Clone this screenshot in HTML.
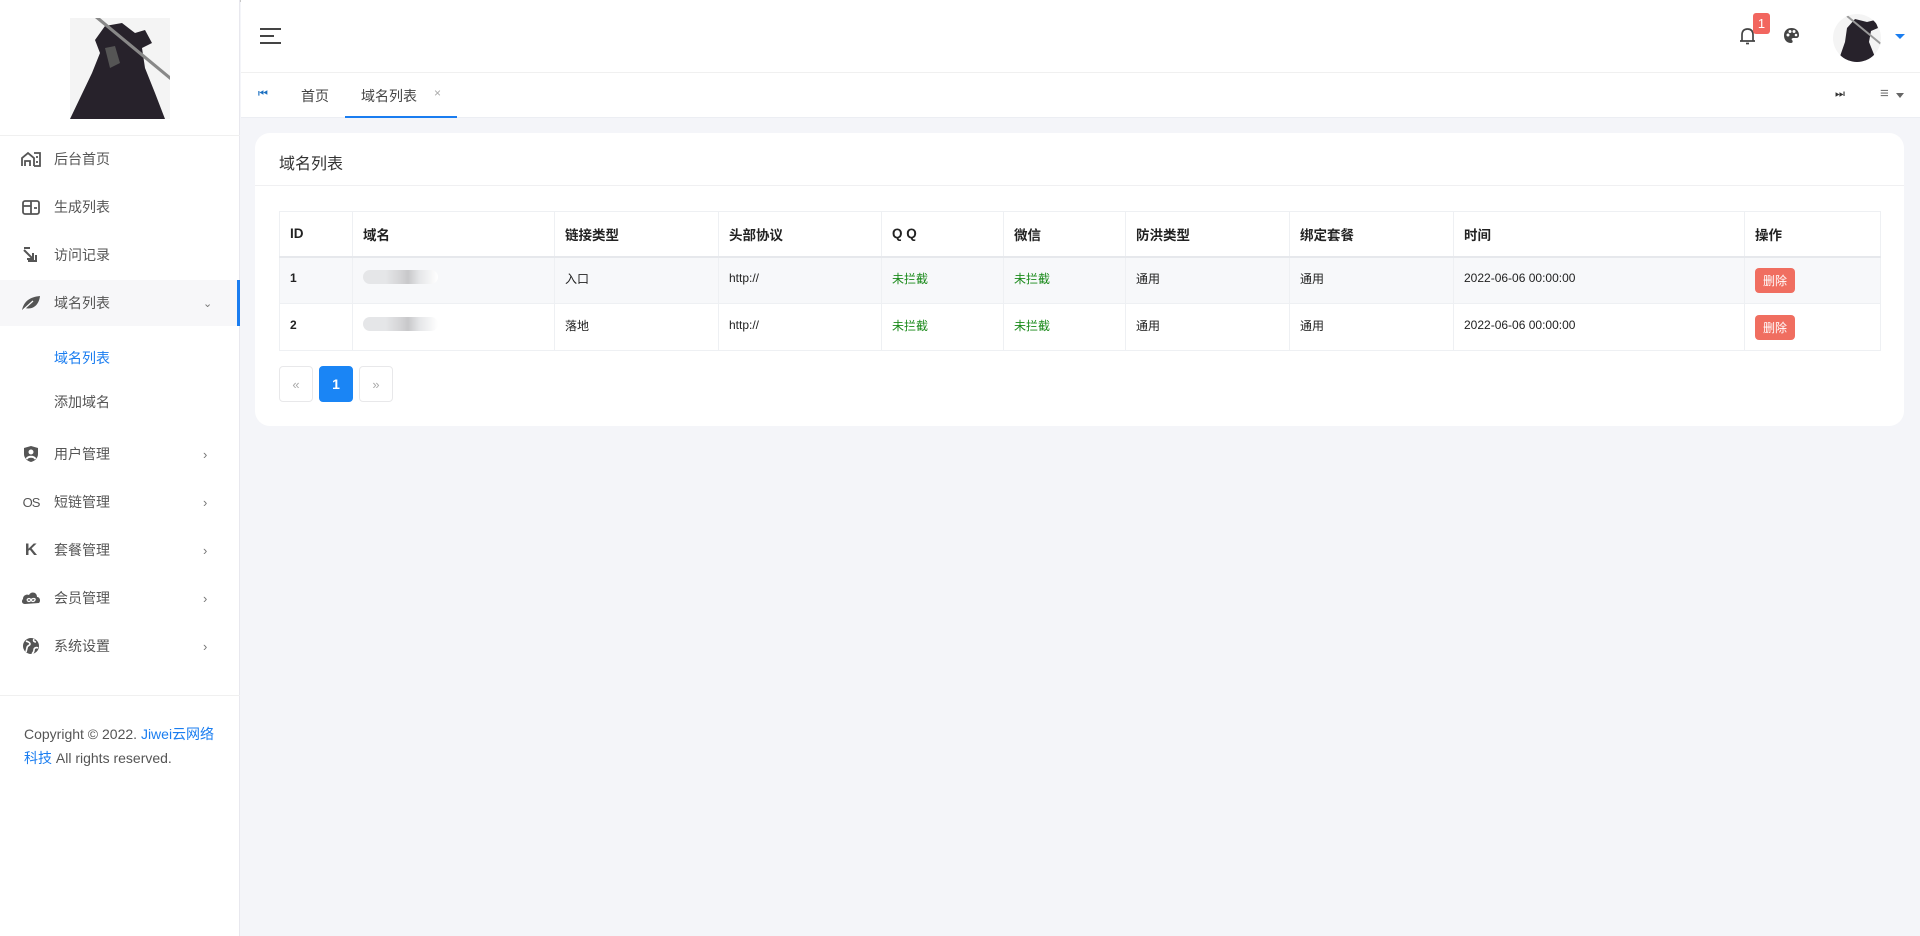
<!DOCTYPE html>
<html><head><meta charset="utf-8"><style>
*{margin:0;padding:0;box-sizing:border-box}
body{width:1920px;height:936px;overflow:hidden;background:#f4f5f9;font-family:"Liberation Sans","Noto Sans CJK SC",sans-serif;color:#333;position:relative}
.side{position:absolute;left:0;top:0;width:240px;height:936px;background:#fff;border-right:1px solid #e8e8ee}
.abs{position:absolute}
.mi{position:absolute;left:0;width:240px;height:46px;display:flex;align-items:center;font-size:14px;color:#555}
.mi .ic{width:20px;margin-left:21px;margin-right:13px;display:flex;justify-content:center}
.mi .ar{position:absolute;left:203px;font-size:13px;color:#777}
.top{position:absolute;left:241px;top:0;right:0;height:73px;background:#fff;border-bottom:1px solid #f0f0f0}
.tabs{position:absolute;left:241px;top:73px;right:0;height:45px;background:#fff;border-bottom:1px solid #eceef3}
.card{position:absolute;left:255px;top:133px;width:1649px;height:293px;background:#fff;border-radius:15px}
table{position:absolute;left:24px;top:78px;width:1601px;border-collapse:collapse;font-size:12px;color:#222;table-layout:fixed}
td,th{border:1px solid #eef0f3;text-align:left;padding-left:10px}
th{height:45px;font-weight:bold;font-size:13.5px;border-bottom:2px solid #e6e8ec}
td{height:47px;padding-bottom:4px}
tr.odd td{background:#f7f8fa}
.g{color:#1a8a1a}
.del{display:inline-block;background:#f06e60;color:#fff;border-radius:4px;padding:4px 8px;font-size:12px;margin-top:4px}
.blur{display:inline-block;width:75px;height:14px;border-radius:7px;background:linear-gradient(90deg,#e5e6e8 30%,#d4d4d6 50%,#c8c8ca 60%,#e5e6e8 75%,#fff 100%)}
.pg{position:absolute;top:233px;width:34px;height:36px;border:1px solid #e8e8ea;border-radius:4px;display:flex;align-items:center;justify-content:center;color:#aaa;font-size:13px}
</style></head><body>
<div style="position:absolute;left:0;top:0;width:1920px;height:2px;background:#c8c8c8"></div>
<div class="side">
  <svg class="abs" style="left:70px;top:18px" width="100" height="101" viewBox="0 0 100 101">
    <rect width="100" height="101" fill="#f4f4f4"/>
    <path d="M0 101 L22 55 L30 35 L25 22 L35 8 L52 5 L65 15 L75 12 L82 25 L72 30 L75 50 L85 75 L95 101Z" fill="#27222b"/>
    <path d="M25 0 L100 62 L100 58 L30 0Z" fill="#888"/>
    <path d="M35 30 L45 28 L50 45 L40 50Z" fill="#555"/>
  </svg>
  <div class="abs" style="left:0;top:135px;width:240px;border-top:1px solid #f0f0f0"></div>
  <div class="mi" style="top:136px"><span class="ic"><svg width="20" height="16" viewBox="0 0 20 16"><path d="M1 15V7l6-5 6 5v8M4 15v-5h5v5M13 2h6v13h-6M16 5v2M16 10v2" fill="none" stroke="#555" stroke-width="1.8"/></svg></span>后台首页</div>
  <div class="mi" style="top:184px"><span class="ic"><svg width="18" height="15" viewBox="0 0 18 15"><rect x="1" y="1" width="16" height="13" rx="2" fill="none" stroke="#555" stroke-width="1.8"/><path d="M9 1v13M1 6h8M12 8h3" stroke="#555" stroke-width="1.8"/></svg></span>生成列表</div>
  <div class="mi" style="top:232px"><span class="ic"><svg width="18" height="16" viewBox="0 0 18 16"><path d="M2 3l9 9M11 6v6H5M2 1h6M14 8v6H6" fill="none" stroke="#555" stroke-width="2"/></svg></span>访问记录</div>
  <div class="mi" style="top:280px;background:#f7f7f9;border-right:3px solid #1a7df0"><span class="ic"><svg width="20" height="16" viewBox="0 0 20 16"><path d="M1 15C3 6 9 2 19 1C18 10 12 15 4 13Z" fill="#555"/><path d="M2 15L12 6" stroke="#fff" stroke-width="1.2"/></svg></span>域名列表<span class="ar" style="font-size:11px">⌄</span></div>
  <div class="abs" style="left:54px;top:348px;font-size:14px;color:#1a7df0">域名列表</div>
  <div class="abs" style="left:54px;top:392px;font-size:14px;color:#555">添加域名</div>
  <div class="mi" style="top:431px"><span class="ic"><svg width="16" height="18" viewBox="0 0 16 18"><path d="M8 1L15 3V9C15 13 12 16 8 17C4 16 1 13 1 9V3Z" fill="#555"/><circle cx="8" cy="7" r="2.5" fill="#fff"/><path d="M3.5 14C5 11 11 11 12.5 14" stroke="#fff" stroke-width="2" fill="none"/></svg></span>用户管理<span class="ar">›</span></div>
  <div class="mi" style="top:479px"><span class="ic" style="font-size:13px;color:#555;letter-spacing:-1px">OS</span>短链管理<span class="ar">›</span></div>
  <div class="mi" style="top:527px"><span class="ic" style="font-weight:bold;font-size:17px;color:#555">K</span>套餐管理<span class="ar">›</span></div>
  <div class="mi" style="top:575px"><span class="ic"><svg width="20" height="14" viewBox="0 0 20 14"><path d="M4 13C1 13 0 10 2 8C2 4 6 3 8 4C10 0 16 1 16 6C19 6 20 10 18 12Z" fill="#555"/><path d="M6 9c1-2 3-2 4 0s3 2 4 0s-3-2-4 0s-3 2-4 0" stroke="#fff" stroke-width="1.3" fill="none"/></svg></span>会员管理<span class="ar">›</span></div>
  <div class="mi" style="top:623px"><span class="ic"><svg width="18" height="18" viewBox="0 0 18 18"><circle cx="9" cy="9" r="8" fill="#555"/><path d="M4 4c2 1 4 1 4 3s-3 1-3 4l-1 4M12 2c-1 2 0 3 2 3M16 11c-2-1-4 0-4 2s-1 3-2 4" stroke="#fff" stroke-width="1.6" fill="none"/></svg></span>系统设置<span class="ar">›</span></div>
  <div class="abs" style="left:0;top:695px;width:240px;border-top:1px solid #f0f0f0"></div>
  <div class="abs" style="left:24px;top:722px;font-size:14px;line-height:24px;color:#555;width:200px">Copyright © 2022. <span style="color:#1a7df0">Jiwei云网络科技</span> All rights reserved.</div>
</div>
<div class="top">
  <svg class="abs" style="left:19px;top:28px" width="21" height="16" viewBox="0 0 21 16"><path d="M0 1h21M0 8h14M0 15h21" stroke="#444" stroke-width="2"/></svg>
  <svg class="abs" style="left:1498px;top:27px" width="17" height="19" viewBox="0 0 17 19"><path d="M3 14V8C3 4 5 2 8.5 2S14 4 14 8V14H16H1Z" fill="none" stroke="#444" stroke-width="1.7"/><path d="M7 16.5h3" stroke="#444" stroke-width="1.7"/></svg>
  <div class="abs" style="left:1512px;top:13px;width:17px;height:21px;background:#f2665f;border-radius:3px;color:#fff;font-size:13px;text-align:center;line-height:21px">1</div>
  <svg class="abs" style="left:1542px;top:27px" width="17" height="17" viewBox="0 0 17 17"><path d="M8.5 1C4 1 1 4 1 8.5S4 16 8 16c2 0 2-2 1-3s0-2 2-2h2c2 0 3-1 3-3C16 4 13 1 8.5 1Z" fill="#444"/><circle cx="5" cy="8" r="1.5" fill="#fff"/><circle cx="7" cy="4.5" r="1.5" fill="#fff"/><circle cx="11" cy="4.5" r="1.5" fill="#fff"/><circle cx="13" cy="8" r="1.3" fill="#fff"/></svg>
  <svg class="abs" style="left:1592px;top:14px" width="48" height="48" viewBox="0 0 48 48"><clipPath id="c"><circle cx="24" cy="24" r="24"/></clipPath><g clip-path="url(#c)"><rect width="48" height="48" fill="#f4f4f4"/><path d="M5 48L12 28L14 14L22 5L34 8L42 6L45 14L38 17L36 28L44 48Z" fill="#27222b"/><path d="M14 2L48 30" stroke="#999" stroke-width="2"/></g></svg>
  <div class="abs" style="left:1654px;top:34px;border-left:5px solid transparent;border-right:5px solid transparent;border-top:5px solid #1a7df0"></div>
</div>
<div class="tabs">
  <div class="abs" style="left:17px;top:15px;font-size:11px;color:#1a6fc0;letter-spacing:-3px">⏮</div>
  <div class="abs" style="left:60px;top:13px;font-size:14px;color:#444">首页</div>
  <div class="abs" style="left:120px;top:13px;font-size:14px;color:#444">域名列表</div>
  <div class="abs" style="left:193px;top:13px;font-size:12px;color:#aaa">×</div>
  <div class="abs" style="left:104px;top:43px;width:112px;height:2px;background:#1a7df0"></div>
  <div class="abs" style="left:1594px;top:15px;font-size:11px;color:#333">⏭</div>
  <div class="abs" style="left:1639px;top:12px;font-size:15px;color:#777">≡</div>
  <div class="abs" style="left:1655px;top:20px;border-left:4px solid transparent;border-right:4px solid transparent;border-top:5px solid #666"></div>
</div>
<div class="card">
  <div class="abs" style="left:24px;top:17px;font-size:16px;color:#333">域名列表</div>
  <div class="abs" style="left:0;top:52px;width:1649px;border-top:1px solid #f0f0f2"></div>
  <table>
    <colgroup><col style="width:73px"><col style="width:202px"><col style="width:164px"><col style="width:163px"><col style="width:122px"><col style="width:122px"><col style="width:164px"><col style="width:164px"><col style="width:291px"><col style="width:136px"></colgroup>
    <tr><th>ID</th><th>域名</th><th>链接类型</th><th>头部协议</th><th>Q Q</th><th>微信</th><th>防洪类型</th><th>绑定套餐</th><th>时间</th><th>操作</th></tr>
    <tr class="odd"><td><b>1</b></td><td><span class="blur"></span></td><td>入口</td><td>http://</td><td class="g">未拦截</td><td class="g">未拦截</td><td>通用</td><td>通用</td><td>2022-06-06 00:00:00</td><td><span class="del">删除</span></td></tr>
    <tr><td><b>2</b></td><td><span class="blur"></span></td><td>落地</td><td>http://</td><td class="g">未拦截</td><td class="g">未拦截</td><td>通用</td><td>通用</td><td>2022-06-06 00:00:00</td><td><span class="del">删除</span></td></tr>
  </table>
  <div class="pg" style="left:24px">«</div>
  <div class="pg" style="left:64px;background:#1a85f5;border-color:#1a85f5;color:#fff;font-weight:bold;font-size:14px">1</div>
  <div class="pg" style="left:104px">»</div>
</div>
</body></html>
